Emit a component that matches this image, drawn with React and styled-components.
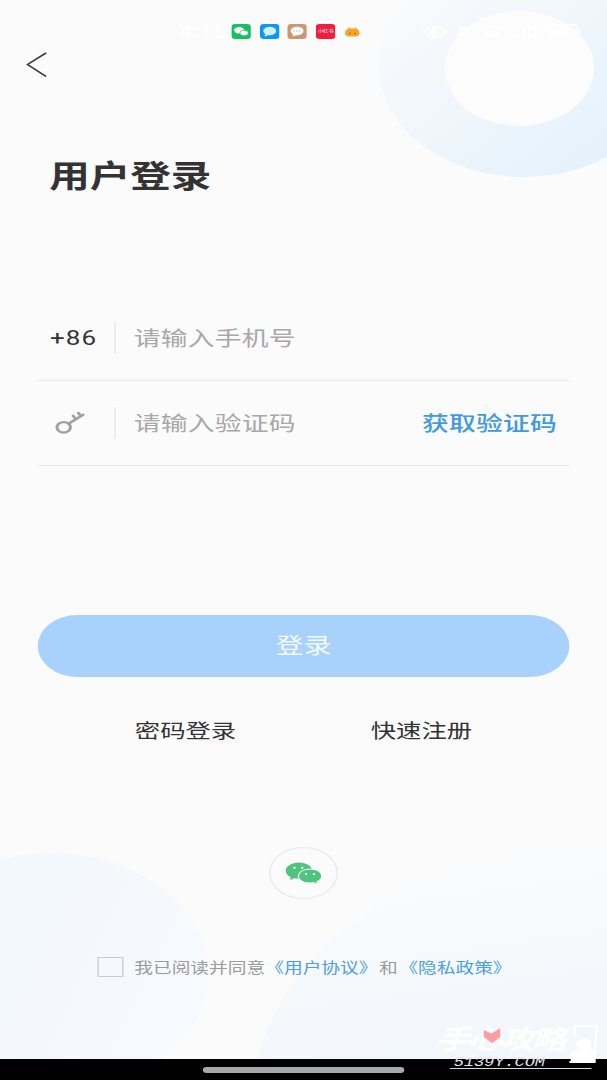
import React from "react";
import styled, { createGlobalStyle } from "styled-components";

const Global = createGlobalStyle`
  html, body { margin: 0; padding: 0; background: #fbfbfb; overflow: hidden; }
  * { box-sizing: border-box; }
`;

const Screen = styled.div`
  position: relative;
  width: 466.92px;
  height: 1080px;
  overflow: hidden;
  transform: scaleX(1.3);
  transform-origin: 0 0;
  display: flex;
  flex-direction: column;
  background: #fbfbfb;
  font-family: "Noto Sans CJK SC", "Noto Sans", sans-serif;
`;

const Blob = styled.div`
  position: absolute;
  left: ${(p) => p.$x - p.$r}px;
  top: ${(p) => p.$y - p.$r}px;
  width: ${(p) => p.$r * 2}px;
  height: ${(p) => p.$r * 2}px;
  border-radius: 50%;
  background: ${(p) => p.$bg};
`;

const Content = styled.div`
  position: relative;
  flex: 1;
  display: flex;
  flex-direction: column;
`;

const StatusBar = styled.div`
  height: 15px;
  margin-top: 24px;
  padding-left: 138px;
  padding-right: 20px;
  display: flex;
  align-items: center;
`;

const Time = styled.span`
  width: 40px;
  font: 500 18px/15px Roboto, sans-serif;
  color: #ffffff;
`;

const NotifyIcons = styled.div`
  display: flex;
  gap: 6.5px;
  align-items: center;
`;

const SystemIcons = styled.div`
  margin-left: auto;
  display: flex;
  gap: 6px;
  align-items: center;
`;

const BackLink = styled.div`
  margin: 13px 0 0 20px;
  width: 17px;
  height: 25px;
  display: flex;
`;

const Title = styled.h1`
  margin: 77px 0 0 37.8px;
  font-size: 31.2px;
  line-height: 40px;
  font-weight: 700;
  color: #333333;
`;

const Form = styled.div`
  margin: 102px 28.5px 0;
  display: flex;
  flex-direction: column;
`;

const Row = styled.div`
  height: 85px;
  border-bottom: 1px solid #e9e9e9;
  display: flex;
  align-items: center;
`;

const Prefix = styled.div`
  width: 60.3px;
  height: 32px;
  padding-left: 10px;
  display: flex;
  align-items: center;
  border-right: 1px solid #e6e6e6;
  font: 400 20px/32px Roboto, sans-serif;
  letter-spacing: 0.8px;
  color: #333333;
`;

const Placeholder = styled.span`
  margin-left: 14px;
  margin-bottom: 2px;
  flex: 1;
  font-size: 20.6px;
  line-height: 32px;
  letter-spacing: 0.2px;
  color: #a8a8a8;
`;

const CodeLink = styled.span`
  margin-right: 10px;
  margin-bottom: 2px;
  font-size: 20.6px;
  line-height: 32px;
  letter-spacing: 0.15px;
  font-weight: 500;
  color: #3f9ae2;
`;

const LoginButton = styled.button`
  margin: 149px 28.5px 0;
  height: 62px;
  border: 0;
  border-radius: 31px;
  background: #a8d2fb;
  color: #f4f9ff;
  font-family: inherit;
  font-size: 21.5px;
  line-height: 30px;
  padding: 0 0 4px;
`;

const Links = styled.div`
  margin: 38px 28.5px 0;
  padding: 0 75.2px;
  height: 30px;
  display: flex;
  justify-content: space-between;
  align-items: center;
  font-size: 19.5px;
  line-height: 30px;
  color: #333333;
`;

const WechatCircle = styled.div`
  align-self: center;
  margin: 102px 0 0 0.4px;
  width: 52.4px;
  height: 52px;
  border: 1px solid #e8e8e8;
  border-radius: 50%;
  display: flex;
  align-items: center;
  justify-content: center;
`;

const Agreement = styled.div`
  margin: 56px 0 0 75.2px;
  height: 24px;
  display: flex;
  align-items: center;
  font-size: 14.4px;
  line-height: 24px;
  color: #9b9b9b;
`;

const CheckBox = styled.span`
  width: 19.4px;
  height: 20px;
  margin-right: 8.7px;
  border: 1.7px solid #c9cdd0;
  background: transparent;
`;

const Link = styled.span`
  color: #4a9fe6;
  margin-right: ${(p) => p.$after || 0}px;
`;

const Plain = styled.span`
  margin-right: ${(p) => p.$after || 0}px;
`;

const NavBar = styled.div`
  margin-top: auto;
  height: 21px;
  background: #000000;
  display: flex;
  justify-content: center;
  padding-top: 8px;
`;

const NavHandle = styled.div`
  width: 155px;
  height: 6px;
  border-radius: 3px;
  background: #a8a8a8;
`;

const Watermark = styled.div`
  position: absolute;
  left: 335px;
  top: 1021px;
  width: 125px;
  height: 48px;
  color: #ffffff;
`;

const WatermarkTitle = styled.div`
  font-size: 27px;
  line-height: 33px;
  font-weight: 700;
  font-style: italic;
  letter-spacing: -2.4px;
  white-space: nowrap;
`;

const WatermarkSite = styled.div`
  position: absolute;
  left: 11px;
  top: 36px;
  width: 109px;
  height: 12px;
  padding-left: 3px;
  font: italic 400 13px/11px "Liberation Mono", monospace;
  color: #e8e8e8;
  border-bottom: 1px solid #d8d8d8;
  white-space: nowrap;
`;

const WatermarkMark = styled.svg`
  position: absolute;
  left: ${(p) => p.$x}px;
  top: ${(p) => p.$y}px;
`;

const Square = ({ color, children }) => (
  <svg width="15" height="15" viewBox="0 0 15 15">
    <rect width="15" height="15" rx="3" fill={color} />
    {children}
  </svg>
);

const Notifications = () => (
  <NotifyIcons>
    <Square color="#17c05e">
      <ellipse cx="6" cy="6.3" rx="3.9" ry="3.3" fill="#fff" />
      <ellipse cx="9.8" cy="9" rx="3.2" ry="2.7" fill="#fff" stroke="#17c05e" strokeWidth=".6" />
    </Square>
    <Square color="#0d97ee">
      <ellipse cx="7.5" cy="7" rx="5" ry="4.2" fill="#cfeeff" />
      <path d="M4 10l-.6 2.6L7 11z" fill="#cfeeff" />
    </Square>
    <Square color="#cc9674">
      <ellipse cx="7.5" cy="7" rx="5" ry="4.2" fill="#fff" />
      <path d="M4.5 10l-.5 2.4L7.5 11z" fill="#fff" />
      <circle cx="5.3" cy="7" r=".6" fill="#cc9674" />
      <circle cx="7.5" cy="7" r=".6" fill="#cc9674" />
      <circle cx="9.7" cy="7" r=".6" fill="#cc9674" />
    </Square>
    <Square color="#f01d43">
      <text x="7.5" y="9.3" textAnchor="middle" fontSize="4.1" fill="#fff" fontFamily="Noto Sans CJK SC, sans-serif">小红书</text>
    </Square>
    <svg width="12" height="10" viewBox="0 0 12 10" style={{ marginLeft: 1 }}>
      <path d="M.6 7.500C0 4.500 1 2.500 2.400 2L3.200.4 4.800 1.600h2.400L8.800.4 9.600 2c1.400.5 2.400 2.500 1.800 5.500-.2 1.200-1.500 2-3 2h-4.800c-1.500 0-2.800-.8-3-2z" fill="#f8a52c" />
      <circle cx="4" cy="6.500" r=".7" fill="#b3651a" />
      <circle cx="8" cy="6.500" r=".7" fill="#b3651a" />
    </svg>
  </NotifyIcons>
);

const SystemTray = () => (
  <SystemIcons>
    <svg width="20" height="14" viewBox="0 0 20 14" fill="none" stroke="#fff" strokeWidth="1.6">
      <path d="M1 7c2.500-3.600 5.500-5 9-5s6.500 1.400 9 5c-2.500 3.600-5.500 5-9 5s-6.500-1.400-9-5z" />
      <circle cx="10" cy="7" r="2.400" fill="#fff" />
    </svg>
    <svg width="13" height="15" viewBox="0 0 13 15" fill="#fff">
      <path d="M6.500 2C4 2 2.800 4 2.800 6.500V10L1 12h11l-1.800-2V6.500C10.200 4 9 2 6.500 2z" />
      <path d="M1 1l11 13" stroke="#fbfbfb" strokeWidth="1.400" />
    </svg>
    <svg width="19" height="14" viewBox="0 0 19 14" fill="none" stroke="#fff" strokeWidth="1.800">
      <path d="M1 5c5-4.500 12-4.500 17 0M4 8c3-2.600 8-2.600 11 0M7 11c1.500-1.200 3.500-1.200 5 0" />
    </svg>
    <svg width="20" height="14" viewBox="0 0 20 14" fill="#fff">
      <rect x="0" y="9" width="2.500" height="4" />
      <rect x="4" y="6" width="2.500" height="7" />
      <rect x="8" y="3" width="2.500" height="10" />
      <rect x="12" y="1" width="2.500" height="12" />
      <rect x="16" y="1" width="2.500" height="12" />
    </svg>
    <svg width="27" height="15" viewBox="0 0 27 15" fill="none">
      <rect x=".7" y=".7" width="23" height="13.600" rx="3" stroke="#fff" strokeWidth="1.200" />
      <rect x="2.400" y="2.400" width="15" height="10.200" rx="1.500" fill="#fff" />
      <rect x="25" y="5" width="1.500" height="5" rx=".7" fill="#fff" />
    </svg>
  </SystemIcons>
);

const KeyIcon = () => (
  <svg width="27" height="24" viewBox="0 0 27 24" fill="none" stroke="#a0a0a0" strokeWidth="2.300" strokeLinecap="round">
    <ellipse cx="10" cy="16.300" rx="5.200" ry="5.200" />
    <path d="M14 12.500L25 3.600" />
    <path d="M19.500 8.100L17.200 4.800M23.300 5L21.300 2" />
  </svg>
);

const WechatIcon = () => (
  <svg width="29" height="24" viewBox="0 0 29 24">
    <path d="M11 1.500C5.300 1.500 .8 5.200.8 9.700c0 2.600 1.500 4.900 3.800 6.400L4 19l3.400-1.800c1.100.3 2.300.5 3.600.5 5.700 0 10.200-3.600 10.200-8S16.700 1.500 11 1.500z" fill="#4fc47f" />
    <path d="M19.500 8c-5 0-9 3.100-9 7s4 7 9 7c1 0 2-.1 2.900-.4l3 1.500-.6-2.500c2.200-1.300 3.700-3.300 3.700-5.600 0-3.900-4-7-9-7z" fill="#4fc47f" stroke="#fbfbfb" strokeWidth=".8" />
    <circle cx="7.500" cy="6.800" r="1" fill="#fff" />
    <circle cx="13.500" cy="6.800" r="1" fill="#fff" />
    <circle cx="16.500" cy="13" r="1" fill="#fff" />
    <circle cx="22.500" cy="13" r="1" fill="#fff" />
  </svg>
);

export default function App() {
  return (
    <>
      <Global />
      <Screen>
        <Blob $x={403} $y={65} $r={112} $bg="linear-gradient(135deg, #fafbfc 10%, #eff6fc 50%, #e3f1fb 90%)" />
        <Blob $x={399.5} $y={68.5} $r={57.5} $bg="#fcfcfc" />
        <Blob $x={40} $y={973} $r={120} $bg="linear-gradient(110deg, #f3f8fe 35%, #f7fafd 100%)" />
        <Blob $x={440} $y={1100} $r={245} $bg="linear-gradient(170deg, #f9fbfc 8%, #f2f7fc 40%, #e8f2fb 80%)" />
        <Content>
          <StatusBar>
            <Time>4:16</Time>
            <Notifications />
            <SystemTray />
          </StatusBar>
          <BackLink>
            <svg width="17" height="25" viewBox="0 0 17 25" fill="none" stroke="#3a3a3a" strokeWidth="1.500">
              <path d="M15.500 .8L1.200 12.500 15.500 24.500" />
            </svg>
          </BackLink>
          <Title>用户登录</Title>
          <Form>
            <Row>
              <Prefix>+86</Prefix>
              <Placeholder>请输入手机号</Placeholder>
            </Row>
            <Row>
              <Prefix>
                <KeyIcon />
              </Prefix>
              <Placeholder>请输入验证码</Placeholder>
              <CodeLink>获取验证码</CodeLink>
            </Row>
          </Form>
          <LoginButton>登录</LoginButton>
          <Links>
            <span>密码登录</span>
            <span>快速注册</span>
          </Links>
          <WechatCircle>
            <WechatIcon />
          </WechatCircle>
          <Agreement>
            <CheckBox />
            <Plain>我已阅读并同意</Plain>
            <Link $after={1.2}>《用户协议》</Link>
            <Plain $after={1.2}>和</Plain>
            <Link>《隐私政策》</Link>
          </Agreement>
          <NavBar>
            <NavHandle />
          </NavBar>
        </Content>
        <Watermark>
          <WatermarkTitle>手心攻略</WatermarkTitle>
          <WatermarkSite>5139Y.COM</WatermarkSite>
          <WatermarkMark $x={36.5} $y={7} width="13" height="15" viewBox="0 0 13 15">
            <path d="M0 2l6 3.500L13 0v9l-6.500 6L0 9z" fill="#fb9fa3" />
          </WatermarkMark>
          <WatermarkMark $x={101} $y={3} width="24" height="42" viewBox="0 0 24 42" fill="none" stroke="#fff" strokeWidth="2">
            <path d="M6 12V2h17l-2 36H2" />
            <circle cx="13" cy="20" r="5" fill="#fff" />
            <path d="M4 38v-6c0-5 3-7 9-7s8 2 8 7v6z" fill="#fff" />
          </WatermarkMark>
        </Watermark>
      </Screen>
    </>
  );
}
